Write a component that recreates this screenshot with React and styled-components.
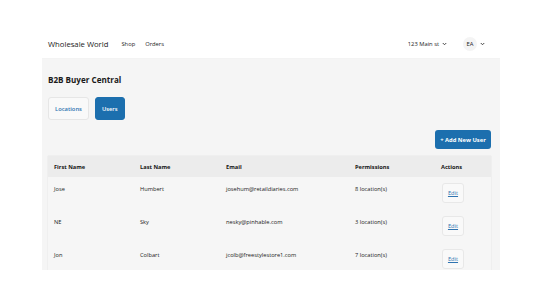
import React from "react";
import styled, { createGlobalStyle } from "styled-components";

const Global = createGlobalStyle`
  html, body { margin: 0; padding: 0; background: #fff; }
  body { font-family: "Open Sans", "Liberation Sans", sans-serif; color: #222; }
`;

const Page = styled.div`
  width: 458px;
  margin: 0 auto;
  padding-top: 30px;
`;

const Header = styled.header`
  height: 29px;
  display: flex;
  align-items: center;
  padding: 0 6px;
  border-bottom: 1px solid #f3f3f3;
  box-sizing: border-box;
`;

const Brand = styled.div`
  font-size: 7.7px;
  color: #1a1a1a;
  margin-right: 13px;
`;

const NavLink = styled.a`
  font-size: 5.8px;
  color: #222;
  margin-right: 10px;
  text-decoration: none;
`;

const Spacer = styled.div`
  flex: 1;
`;

const Dropdown = styled.div`
  display: flex;
  align-items: center;
  gap: 3px;
  font-size: 5.8px;
  color: #222;
  margin-left: ${(p) => p.$ml || 0}px;
  margin-right: ${(p) => p.$mr || 0}px;
`;

const Avatar = styled.span`
  display: inline-flex;
  align-items: center;
  justify-content: center;
  width: 14px;
  height: 14px;
  border-radius: 50%;
  background: #f4f4f4;
`;

const Chevron = () => (
  <svg width="5" height="4" viewBox="0 0 10 8">
    <path d="M1.5 2 L5 5.5 L8.5 2" stroke="#333" strokeWidth="1.8" fill="none" />
  </svg>
);

const Panel = styled.main`
  background: #f5f5f5;
  padding: 15px 9px 0 6px;
  height: 211px;
  box-sizing: border-box;
  overflow: hidden;
`;

const Title = styled.h1`
  font-size: 8.1px;
  font-weight: 700;
  margin: 0 0 12px 0;
  color: #1a1a1a;
`;

const Tabs = styled.div`
  display: flex;
  gap: 6px;
`;

const Tab = styled.button`
  font-family: inherit;
  font-size: 5.8px;
  font-weight: 600;
  height: 23px;
  padding: 0 6px;
  border-radius: 3px;
  border: 1px solid ${(p) => (p.$active ? "#1c6fae" : "#e6e6e6")};
  background: ${(p) => (p.$active ? "#1c6fae" : "#f9f9f9")};
  color: ${(p) => (p.$active ? "#fff" : "#2f74b1")};
`;

const ActionRow = styled.div`
  display: flex;
  justify-content: flex-end;
  margin-top: 10px;
`;

const PrimaryButton = styled.button`
  font-family: inherit;
  font-size: 5.8px;
  font-weight: 700;
  height: 19px;
  width: 56px;
  padding: 0;
  border: none;
  border-radius: 3px;
  background: #1c6fae;
  color: #fff;
`;

const Table = styled.table`
  width: 100%;
  table-layout: fixed;
  margin-top: 7px;
  border-collapse: collapse;
  background: #f6f6f6;
  box-shadow: 0 0 1px rgba(0, 0, 0, 0.15);
  font-size: 5.7px;
  color: #222;
`;

const Th = styled.th`
  background: #ececec;
  text-align: left;
  font-weight: 700;
  color: #151515;
  height: 21px;
  padding: 0 6px;
  width: ${(p) => (p.$w ? `${p.$w}px` : "auto")};
`;

const Td = styled.td`
  vertical-align: top;
  padding: 8px 6px 0 6px;
  height: 33px;
  box-sizing: border-box;
  white-space: nowrap;
`;

const ActionTd = styled(Td)`
  padding-top: 6px;
  padding-left: 7px;
`;

const EditButton = styled.button`
  font-family: inherit;
  font-size: 5.7px;
  width: 22px;
  height: 20px;
  padding: 0;
  border: 1px solid #e8e8e8;
  border-radius: 3px;
  background: #f9f9f9;
  color: #2f74b1;
  text-decoration: underline;
`;

const users = [
  { first: "Jose", last: "Humbert", email: "josehum@retaildiaries.com", perms: 8 },
  { first: "NE", last: "Sky", email: "nesky@pinhable.com", perms: 3 },
  { first: "Jon", last: "Colbart", email: "jcolb@freestylestore1.com", perms: 7 },
];

export default function App() {
  return (
    <>
      <Global />
      <Page>
        <Header>
          <Brand>Wholesale World</Brand>
          <NavLink>Shop</NavLink>
          <NavLink>Orders</NavLink>
          <Spacer />
          <Dropdown>
            123 Main st <Chevron />
          </Dropdown>
          <Dropdown $ml={16} $mr={9}>
            <Avatar>EA</Avatar>
            <Chevron />
          </Dropdown>
        </Header>
        <Panel>
          <Title>B2B Buyer Central</Title>
          <Tabs>
            <Tab>Locations</Tab>
            <Tab $active>Users</Tab>
          </Tabs>
          <ActionRow>
            <PrimaryButton>+ Add New User</PrimaryButton>
          </ActionRow>
          <Table>
            <thead>
              <tr>
                <Th $w={74}>First Name</Th>
                <Th $w={74}>Last Name</Th>
                <Th $w={117}>Email</Th>
                <Th $w={74}>Permissions</Th>
                <Th>Actions</Th>
              </tr>
            </thead>
            <tbody>
              {users.map((u) => (
                <tr key={u.email}>
                  <Td>{u.first}</Td>
                  <Td>{u.last}</Td>
                  <Td>{u.email}</Td>
                  <Td>{u.perms} location(s)</Td>
                  <ActionTd>
                    <EditButton>Edit</EditButton>
                  </ActionTd>
                </tr>
              ))}
            </tbody>
          </Table>
        </Panel>
      </Page>
    </>
  );
}
